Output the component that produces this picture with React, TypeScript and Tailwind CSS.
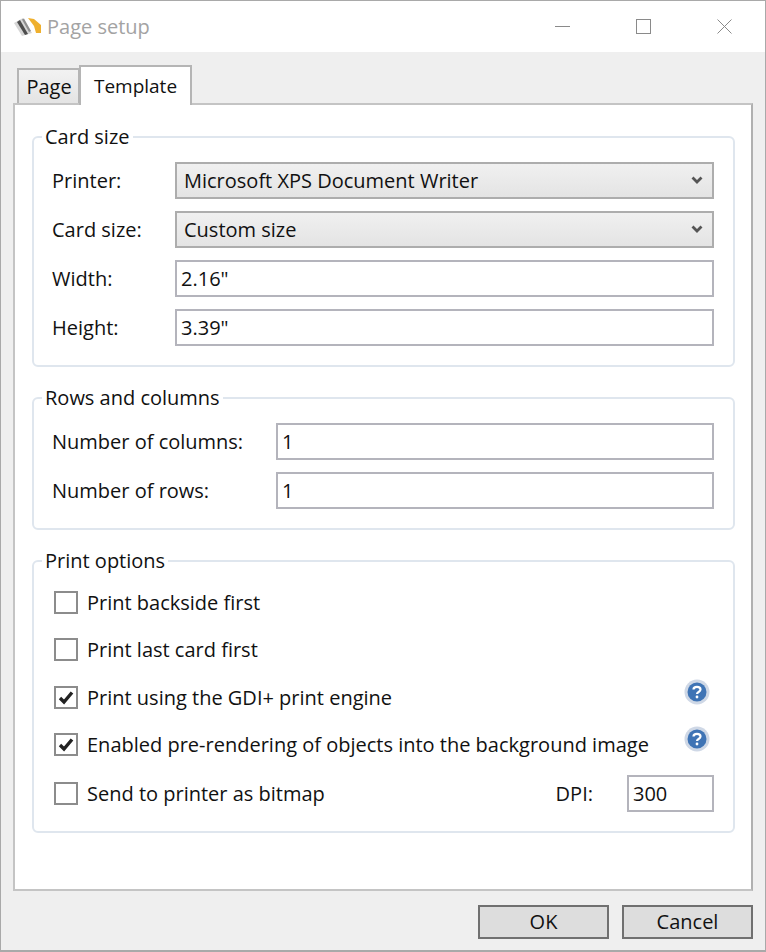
const FONT = "font-['Open_Sans','Noto_Sans',sans-serif]";

function Logo() {
  return (
    <svg width="28" height="22" viewBox="0 0 28 22">
      <path d="M0 7 L9 2 L18 17 L8 20 Z" fill="#d6d6d6" />
      <path d="M3 6 L6 4 L14 18 L11 19 Z" fill="#4d4d4d" />
      <path d="M8 3.5 L10 2.5 L17 15 L15 16 Z" fill="#8f8f8f" />
      <path d="M14 2 L20 3 L27 9 L27 17 L22 17 L20 10 Z" fill="#efb02e" />
    </svg>
  );
}

function Help() {
  return (
    <svg width="26" height="28" viewBox="0 0 26 28" className="shrink-0">
      <circle cx="13" cy="14" r="12.5" fill="#cfd8e6" />
      <circle cx="13" cy="14" r="9.5" fill="#3f74b5" />
      <path d="M9.5 11.5 C9.5 8 16.5 8 16.5 11.5 C16.5 14 13 14 13 16" fill="none" stroke="#fff" strokeWidth="2.2" />
      <circle cx="13" cy="19" r="1.4" fill="#fff" />
    </svg>
  );
}

function Check({ on }: { on?: boolean }) {
  return (
    <span className="w-6 h-[23px] border-2 border-[#8c8c8c] bg-white flex items-center justify-center shrink-0">
      {on && (
        <svg width="16" height="14" viewBox="0 0 16 14">
          <path d="M2 7 L6 11 L14 1.5" fill="none" stroke="#222" strokeWidth="3.4" />
        </svg>
      )}
    </span>
  );
}

function Chevron() {
  return (
    <svg width="12" height="9" viewBox="0 0 12 9">
      <path d="M1.5 1.5 L6 6 L10.5 1.5" fill="none" stroke="#555" strokeWidth="2.8" />
    </svg>
  );
}

function Group({ title, children, className }: { title: string; children: React.ReactNode; className?: string }) {
  return (
    <fieldset className={`border-2 border-[#dfe6ee] rounded-md ml-[17px] mr-[16px] pl-[18px] pr-[19px] ${className ?? ''}`}>
      <legend className="-ml-[10px] px-[3px] leading-[26px]">{title}</legend>
      {children}
    </fieldset>
  );
}

function Select({ value }: { value: string }) {
  return (
    <div className="flex-1 h-[37px] border-2 border-[#adadad] bg-gradient-to-b from-[#f0f0f0] to-[#e4e4e4] flex items-center justify-between pl-[7px] pr-[9px]">
      <span className="pt-px">{value}</span>
      <Chevron />
    </div>
  );
}

function Input({ value, className }: { value: string; className?: string }) {
  return (
    <div className={`h-[37px] border-2 border-[#b4b4bc] bg-white flex items-center pl-[4px] pt-px ${className ?? 'flex-1'}`}>
      {value}
    </div>
  );
}

function Row({ label, labelW, children }: { label: string; labelW: string; children: React.ReactNode }) {
  return (
    <div className="flex items-center">
      <span className={`${labelW} pt-px`}>{label}</span>
      {children}
    </div>
  );
}

function CheckRow({ label, on, help, className }: { label: string; on?: boolean; help?: boolean; className?: string }) {
  return (
    <div className={`flex items-center h-[37px] ${className ?? ''}`}>
      <span className="ml-[2px] mr-[9px]"><Check on={on} /></span>
      <span className="flex-1">{label}</span>
      {help && <span className="mr-[4px] -mt-[12px]"><Help /></span>}
    </div>
  );
}

export default function App() {
  return (
    <div className={`${FONT} w-[766px] h-[952px] bg-[#efefef] border border-b-2 border-[#a9a9a9] flex flex-col text-[20px] text-[#111] overflow-hidden`}>
      {/* Title bar */}
      <div className="h-[51px] bg-white flex items-center shrink-0">
        <span className="ml-[13px] mr-[5px] flex"><Logo /></span>
        <span className="text-[#a3a3a3]">Page setup</span>
        <div className="ml-auto flex items-center">
          <span className="w-[15px] h-px bg-[#8a8a8a]" />
          <span className="w-[15px] h-[15px] border border-[#8a8a8a] ml-[66px]" />
          <svg width="15" height="15" viewBox="0 0 15 15" className="ml-[66px] mr-[33px]">
            <path d="M0.5 0.5 L14.5 14.5 M14.5 0.5 L0.5 14.5" stroke="#8a8a8a" strokeWidth="1" />
          </svg>
        </div>
      </div>

      {/* Tabs */}
      <div className="flex items-end h-[51px] pl-[16px] shrink-0 relative z-10">
        <div className="w-[63px] h-[35px] border-2 border-b-0 border-[#b5b5b5] bg-gradient-to-b from-[#f2f2f2] to-[#e4e4e4] flex items-center justify-center pl-px">Page</div>
        <div className="w-[113px] h-[40px] -ml-px -mb-[2px] border-2 border-b-0 border-[#b5b5b5] bg-white flex items-center justify-center text-[19px]">Template</div>
      </div>

      {/* Panel */}
      <div className="mx-[12px] h-[788px] bg-white border-2 border-[#c4c4c4] border-r-[#b0b0b0] pt-[19px] flex flex-col gap-[18px] shrink-0">
        <Group title="Card size" className="pb-[19px]">
          <div className="flex flex-col gap-3 pt-[12px]">
            <Row label="Printer:" labelW="w-[123px]"><Select value="Microsoft XPS Document Writer" /></Row>
            <Row label="Card size:" labelW="w-[123px]"><Select value="Custom size" /></Row>
            <Row label="Width:" labelW="w-[123px]"><Input value={'2.16"'} /></Row>
            <Row label="Height:" labelW="w-[123px]"><Input value={'3.39"'} /></Row>
          </div>
        </Group>
        <Group title="Rows and columns" className="pb-[19px]">
          <div className="flex flex-col gap-3 pt-[12px]">
            <Row label="Number of columns:" labelW="w-[224px]"><Input value="1" /></Row>
            <Row label="Number of rows:" labelW="w-[224px]"><Input value="1" /></Row>
          </div>
        </Group>
        <Group title="Print options" className="pb-[19px]">
          <div className="flex flex-col gap-[10px] pt-[10px]">
            <CheckRow label="Print backside first" />
            <CheckRow label="Print last card first" />
            <CheckRow label="Print using the GDI+ print engine" on help className="mt-px" />
            <CheckRow label="Enabled pre-rendering of objects into the background image" on help />
            <div className="flex items-center h-[37px] mt-[2px]">
              <span className="ml-[2px] mr-[9px]"><Check /></span>
              <span className="flex-1">Send to printer as bitmap</span>
              <span className="mr-[34px]">DPI:</span>
              <Input value="300" className="w-[87px]" />
            </div>
          </div>
        </Group>
      </div>

      {/* Buttons */}
      <div className="flex justify-end gap-[13px] mt-[14px] mr-[12px]">
        <button className="w-[131px] h-[34px] border-2 border-[#707070] bg-[#dddddd] flex items-center justify-center">OK</button>
        <button className="w-[131px] h-[34px] border-2 border-[#707070] bg-[#dddddd] flex items-center justify-center">Cancel</button>
      </div>
    </div>
  );
}
